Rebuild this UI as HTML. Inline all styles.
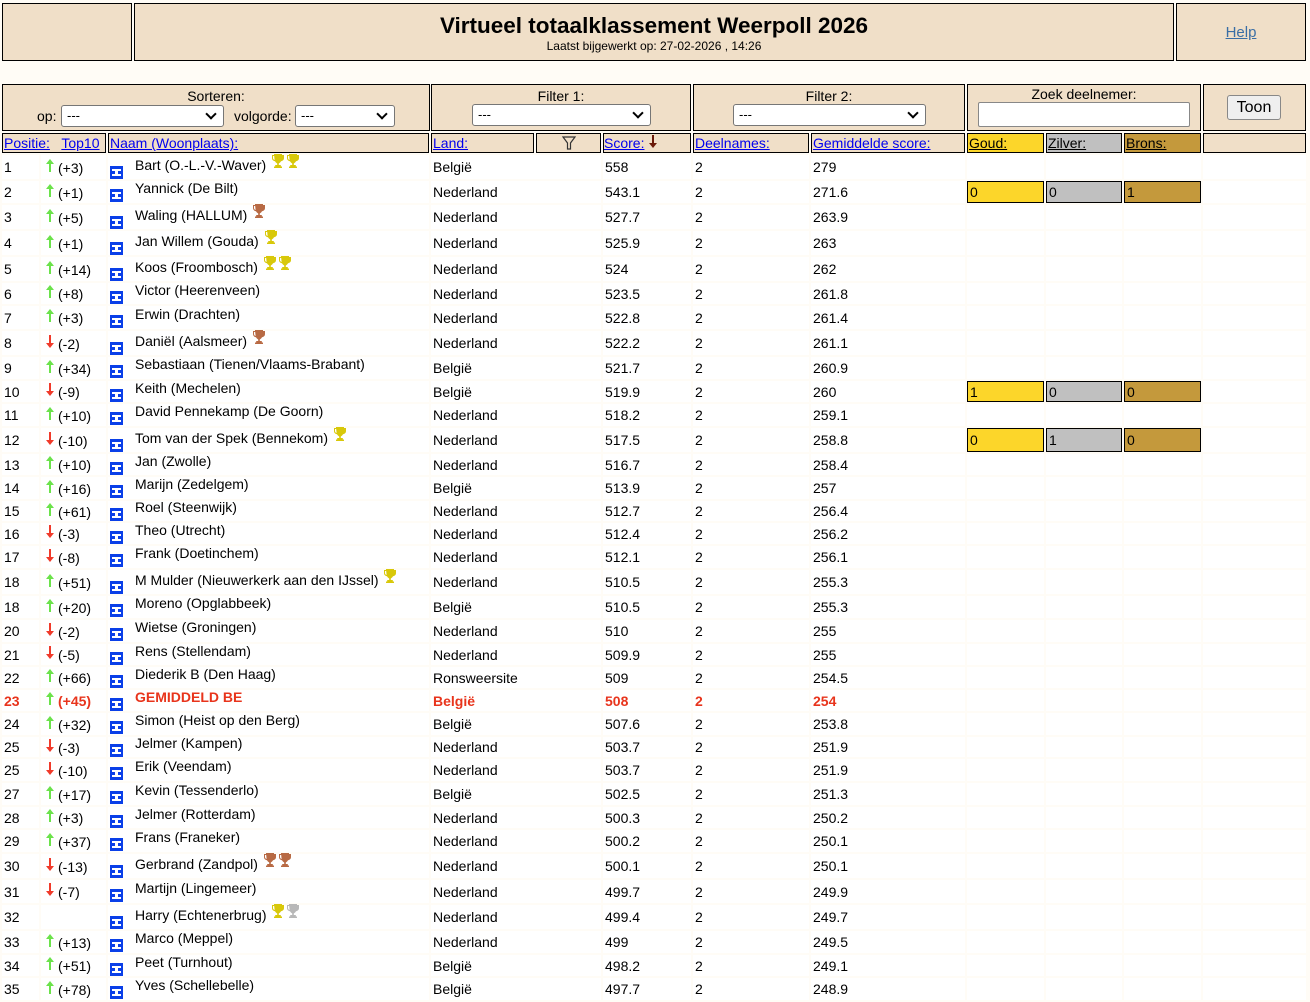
<!DOCTYPE html>
<html><head><meta charset="utf-8">
<style>
html,body{margin:0;padding:0;background:#fffcf6;width:1310px;height:1001px;overflow:hidden;font-family:"Liberation Sans",Arial,sans-serif;font-size:14px;color:#000}
.box{position:absolute;background:#f0dfc8;border:1px solid #000;box-sizing:border-box}
a{color:#00e;text-decoration:underline}
.sel{position:absolute;height:22px;background:#fff;border:1px solid #767676;border-radius:3px;box-sizing:border-box;font-size:13px;padding:2px 5px}
.sel:after{content:"";position:absolute;right:8px;top:4px;width:6px;height:6px;border-right:2px solid #000;border-bottom:2px solid #000;transform:rotate(45deg)}
table{position:absolute;left:0;top:131px;border-collapse:separate;border-spacing:2px;table-layout:fixed;width:1308px}
td{background:#fff;padding:0 0 0 2px;white-space:nowrap;overflow:visible;vertical-align:middle}
thead td{background:#f0dfc8;border:1px solid #000;height:18px;padding:0 1px}
.up,.dn{display:inline-block;width:14px;height:13px;vertical-align:1px;margin-left:0;margin-right:1px}
.up{background:linear-gradient(#6be24a,#6be24a) 6px 3px/2px 10px no-repeat}
.dn{background:linear-gradient(#f03a2a,#f03a2a) 6px 0/2px 10px no-repeat}
.up:before{content:"";display:block;margin-left:3px;width:0;height:0;border-left:4px solid transparent;border-right:4px solid transparent;border-bottom:5px solid #6be24a}
.dn:before{content:"";display:block;margin-left:3px;margin-top:8px;width:0;height:0;border-left:4px solid transparent;border-right:4px solid transparent;border-top:5px solid #f03a2a}
.fl{display:inline-block;vertical-align:-7px;margin-right:12px}
.nm{position:relative;top:-2px}
.tr{display:inline-block;vertical-align:1px;margin-left:1px}
.m{border:1px solid #000;padding:0 2px;height:18px}
.r td{color:#e8341c;font-weight:bold}
.r td.n{font-weight:normal}
</style></head><body>
<svg width="0" height="0" style="position:absolute">
<defs>
<symbol id="cup" viewBox="0 0 14 16"><path d="M3 1h8v1h2v3c0 2-1.5 3-3 3.2C9.3 9.5 8.3 10 7.8 10.5V12h2v1.5H11V15H3v-1.5h1.2V12h2v-1.5C5.7 10 4.7 9.5 4 8.2 2.5 8 1 7 1 5V2h2z M2 3v2c0 1 .7 1.8 1.6 2L3.2 3z M12 3v2c0 1-.7 1.8-1.6 2l.4-4z" fill="currentColor"/></symbol>
<symbol id="flag" viewBox="0 0 13 13"><rect width="13" height="13" fill="#0a3fe8"/><path d="M2 3h9v2H8v3h3v2H2V8h3V5H2z" fill="#fff"/></symbol>
</defs></svg>

<div class="box" style="left:2px;top:3px;width:130px;height:58px"></div>
<div class="box" style="left:134px;top:3px;width:1040px;height:58px;text-align:center">
<div style="font-size:22.5px;font-weight:bold;margin-top:9px">Virtueel totaalklassement Weerpoll 2026</div>
<div style="font-size:12px;margin-top:0px">Laatst bijgewerkt op: 27-02-2026 , 14:26</div></div>
<div class="box" style="left:1176px;top:3px;width:130px;height:58px;text-align:center;line-height:58px;font-size:15px"><a style="color:#3a6ea5">Help</a></div>

<div class="box" style="left:2px;top:84px;width:428px;height:47px">
<div style="position:absolute;left:0;right:0;top:3px;text-align:center">Sorteren:</div>
<div style="position:absolute;left:34px;top:23px">op:</div>
<div class="sel" style="left:58px;top:20px;width:163px">---</div>
<div style="position:absolute;left:231px;top:23px">volgorde:</div>
<div class="sel" style="left:292px;top:20px;width:100px">---</div></div>
<div class="box" style="left:431px;top:84px;width:260px;height:47px">
<div style="position:absolute;left:0;right:0;top:3px;text-align:center">Filter 1:</div>
<div class="sel" style="left:40px;top:19px;width:179px">---</div></div>
<div class="box" style="left:693px;top:84px;width:272px;height:47px">
<div style="position:absolute;left:0;right:0;top:3px;text-align:center">Filter 2:</div>
<div class="sel" style="left:39px;top:19px;width:193px">---</div></div>
<div class="box" style="left:967px;top:84px;width:234px;height:47px">
<div style="position:absolute;left:0;right:0;top:1px;text-align:center">Zoek deelnemer:</div>
<div style="position:absolute;left:10px;top:17px;width:212px;height:25px;background:#fff;border:1px solid #888;border-radius:2px;box-sizing:border-box"></div></div>
<div class="box" style="left:1203px;top:84px;width:103px;height:47px">
<div style="position:absolute;left:23px;top:10px;width:54px;height:25px;background:#efefef;border:1px solid #888;border-radius:3px;box-sizing:border-box;text-align:center;line-height:23px;font-size:16px">Toon</div></div>

<table>
<colgroup><col style="width:37px"><col style="width:65px"><col style="width:321px"><col style="width:103px"><col style="width:65px"><col style="width:88px"><col style="width:116px"><col style="width:154px"><col style="width:77px"><col style="width:76px"><col style="width:77px"><col style="width:103px"></colgroup>
<thead><tr><td colspan="2"><a>Positie:</a>&nbsp;&nbsp; <a>Top10</a></td><td><a>Naam (Woonplaats):</a></td><td><a>Land:</a></td><td style="text-align:center"><svg width="14" height="14" viewBox="0 0 14 14" style="vertical-align:-2px"><path d="M1 1h12L8.5 7v6h-3V7z" fill="none" stroke="#333" stroke-width="1.2"/></svg></td><td style="padding-left:0"><a>Score:</a> <svg width="10" height="14" viewBox="0 0 10 14" style="vertical-align:-1px"><path d="M5 0v10" stroke="#6a1a0a" stroke-width="2"/><path d="M1 8h8l-4 5z" fill="#6a1a0a"/></svg></td><td><a>Deelnames:</a></td><td><a>Gemiddelde score:</a></td><td style="background:#fcd62a"><a style="color:#000">Goud:</a></td><td style="background:#c0c0c0"><a style="color:#000">Zilver:</a></td><td style="background:#c4993c"><a style="color:#000">Brons:</a></td><td></td></tr></thead>
<tbody>
<tr style="height:23px"><td>1</td><td><span class="up"></span>(+3)</td><td><svg class="fl" width="13" height="13"><use href="#flag"/></svg><span class="nm">Bart (O.-L.-V.-Waver) <svg class="tr" width="14" height="16" style="color:#d8c80a"><use href="#cup"/></svg><svg class="tr" width="14" height="16" style="color:#d8c80a"><use href="#cup"/></svg></span></td><td colspan="2">België</td><td>558</td><td>2</td><td>279</td><td></td><td></td><td></td><td></td></tr>
<tr style="height:22px"><td>2</td><td><span class="up"></span>(+1)</td><td><svg class="fl" width="13" height="13"><use href="#flag"/></svg><span class="nm">Yannick (De Bilt)</span></td><td colspan="2">Nederland</td><td>543.1</td><td>2</td><td>271.6</td><td class="m" style="background:#fcd62a">0</td><td class="m" style="background:#c0c0c0">0</td><td class="m" style="background:#c4993c">1</td><td></td></tr>
<tr style="height:24px"><td>3</td><td><span class="up"></span>(+5)</td><td><svg class="fl" width="13" height="13"><use href="#flag"/></svg><span class="nm">Waling (HALLUM) <svg class="tr" width="14" height="16" style="color:#b86a44"><use href="#cup"/></svg></span></td><td colspan="2">Nederland</td><td>527.7</td><td>2</td><td>263.9</td><td></td><td></td><td></td><td></td></tr>
<tr style="height:23px"><td>4</td><td><span class="up"></span>(+1)</td><td><svg class="fl" width="13" height="13"><use href="#flag"/></svg><span class="nm">Jan Willem (Gouda) <svg class="tr" width="14" height="16" style="color:#d8c80a"><use href="#cup"/></svg></span></td><td colspan="2">Nederland</td><td>525.9</td><td>2</td><td>263</td><td></td><td></td><td></td><td></td></tr>
<tr style="height:23px"><td>5</td><td><span class="up"></span>(+14)</td><td><svg class="fl" width="13" height="13"><use href="#flag"/></svg><span class="nm">Koos (Froombosch) <svg class="tr" width="14" height="16" style="color:#d8c80a"><use href="#cup"/></svg><svg class="tr" width="14" height="16" style="color:#d8c80a"><use href="#cup"/></svg></span></td><td colspan="2">Nederland</td><td>524</td><td>2</td><td>262</td><td></td><td></td><td></td><td></td></tr>
<tr style="height:21px"><td>6</td><td><span class="up"></span>(+8)</td><td><svg class="fl" width="13" height="13"><use href="#flag"/></svg><span class="nm">Victor (Heerenveen)</span></td><td colspan="2">Nederland</td><td>523.5</td><td>2</td><td>261.8</td><td></td><td></td><td></td><td></td></tr>
<tr style="height:23px"><td>7</td><td><span class="up"></span>(+3)</td><td><svg class="fl" width="13" height="13"><use href="#flag"/></svg><span class="nm">Erwin (Drachten)</span></td><td colspan="2">Nederland</td><td>522.8</td><td>2</td><td>261.4</td><td></td><td></td><td></td><td></td></tr>
<tr style="height:22px"><td>8</td><td><span class="dn"></span>(-2)</td><td><svg class="fl" width="13" height="13"><use href="#flag"/></svg><span class="nm">Daniël (Aalsmeer) <svg class="tr" width="14" height="16" style="color:#b86a44"><use href="#cup"/></svg></span></td><td colspan="2">Nederland</td><td>522.2</td><td>2</td><td>261.1</td><td></td><td></td><td></td><td></td></tr>
<tr style="height:22px"><td>9</td><td><span class="up"></span>(+34)</td><td><svg class="fl" width="13" height="13"><use href="#flag"/></svg><span class="nm">Sebastiaan (Tienen/Vlaams-Brabant)</span></td><td colspan="2">België</td><td>521.7</td><td>2</td><td>260.9</td><td></td><td></td><td></td><td></td></tr>
<tr style="height:21px"><td>10</td><td><span class="dn"></span>(-9)</td><td><svg class="fl" width="13" height="13"><use href="#flag"/></svg><span class="nm">Keith (Mechelen)</span></td><td colspan="2">België</td><td>519.9</td><td>2</td><td>260</td><td class="m" style="background:#fcd62a">1</td><td class="m" style="background:#c0c0c0">0</td><td class="m" style="background:#c4993c">0</td><td></td></tr>
<tr style="height:22px"><td>11</td><td><span class="up"></span>(+10)</td><td><svg class="fl" width="13" height="13"><use href="#flag"/></svg><span class="nm">David Pennekamp (De Goorn)</span></td><td colspan="2">Nederland</td><td>518.2</td><td>2</td><td>259.1</td><td></td><td></td><td></td><td></td></tr>
<tr style="height:22px"><td>12</td><td><span class="dn"></span>(-10)</td><td><svg class="fl" width="13" height="13"><use href="#flag"/></svg><span class="nm">Tom van der Spek (Bennekom) <svg class="tr" width="14" height="16" style="color:#d8c80a"><use href="#cup"/></svg></span></td><td colspan="2">Nederland</td><td>517.5</td><td>2</td><td>258.8</td><td class="m" style="background:#fcd62a">0</td><td class="m" style="background:#c0c0c0">1</td><td class="m" style="background:#c4993c">0</td><td></td></tr>
<tr style="height:21px"><td>13</td><td><span class="up"></span>(+10)</td><td><svg class="fl" width="13" height="13"><use href="#flag"/></svg><span class="nm">Jan (Zwolle)</span></td><td colspan="2">Nederland</td><td>516.7</td><td>2</td><td>258.4</td><td></td><td></td><td></td><td></td></tr>
<tr style="height:22px"><td>14</td><td><span class="up"></span>(+16)</td><td><svg class="fl" width="13" height="13"><use href="#flag"/></svg><span class="nm">Marijn (Zedelgem)</span></td><td colspan="2">België</td><td>513.9</td><td>2</td><td>257</td><td></td><td></td><td></td><td></td></tr>
<tr style="height:20px"><td>15</td><td><span class="up"></span>(+61)</td><td><svg class="fl" width="13" height="13"><use href="#flag"/></svg><span class="nm">Roel (Steenwijk)</span></td><td colspan="2">Nederland</td><td>512.7</td><td>2</td><td>256.4</td><td></td><td></td><td></td><td></td></tr>
<tr style="height:21px"><td>16</td><td><span class="dn"></span>(-3)</td><td><svg class="fl" width="13" height="13"><use href="#flag"/></svg><span class="nm">Theo (Utrecht)</span></td><td colspan="2">Nederland</td><td>512.4</td><td>2</td><td>256.2</td><td></td><td></td><td></td><td></td></tr>
<tr style="height:22px"><td>17</td><td><span class="dn"></span>(-8)</td><td><svg class="fl" width="13" height="13"><use href="#flag"/></svg><span class="nm">Frank (Doetinchem)</span></td><td colspan="2">Nederland</td><td>512.1</td><td>2</td><td>256.1</td><td></td><td></td><td></td><td></td></tr>
<tr style="height:22px"><td>18</td><td><span class="up"></span>(+51)</td><td><svg class="fl" width="13" height="13"><use href="#flag"/></svg><span class="nm">M Mulder (Nieuwerkerk aan den IJssel) <svg class="tr" width="14" height="16" style="color:#d8c80a"><use href="#cup"/></svg></span></td><td colspan="2">Nederland</td><td>510.5</td><td>2</td><td>255.3</td><td></td><td></td><td></td><td></td></tr>
<tr style="height:22px"><td>18</td><td><span class="up"></span>(+20)</td><td><svg class="fl" width="13" height="13"><use href="#flag"/></svg><span class="nm">Moreno (Opglabbeek)</span></td><td colspan="2">België</td><td>510.5</td><td>2</td><td>255.3</td><td></td><td></td><td></td><td></td></tr>
<tr style="height:22px"><td>20</td><td><span class="dn"></span>(-2)</td><td><svg class="fl" width="13" height="13"><use href="#flag"/></svg><span class="nm">Wietse (Groningen)</span></td><td colspan="2">Nederland</td><td>510</td><td>2</td><td>255</td><td></td><td></td><td></td><td></td></tr>
<tr style="height:21px"><td>21</td><td><span class="dn"></span>(-5)</td><td><svg class="fl" width="13" height="13"><use href="#flag"/></svg><span class="nm">Rens (Stellendam)</span></td><td colspan="2">Nederland</td><td>509.9</td><td>2</td><td>255</td><td></td><td></td><td></td><td></td></tr>
<tr style="height:21px"><td>22</td><td><span class="up"></span>(+66)</td><td><svg class="fl" width="13" height="13"><use href="#flag"/></svg><span class="nm">Diederik B (Den Haag)</span></td><td colspan="2">Ronsweersite</td><td>509</td><td>2</td><td>254.5</td><td></td><td></td><td></td><td></td></tr>
<tr class="r" style="height:21px"><td>23</td><td><span class="up"></span>(+45)</td><td class="n"><svg class="fl" width="13" height="13"><use href="#flag"/></svg><span class="nm" style="font-weight:bold">GEMIDDELD BE</span></td><td colspan="2">België</td><td>508</td><td>2</td><td>254</td><td></td><td></td><td></td><td></td></tr>
<tr style="height:22px"><td>24</td><td><span class="up"></span>(+32)</td><td><svg class="fl" width="13" height="13"><use href="#flag"/></svg><span class="nm">Simon (Heist op den Berg)</span></td><td colspan="2">België</td><td>507.6</td><td>2</td><td>253.8</td><td></td><td></td><td></td><td></td></tr>
<tr style="height:20px"><td>25</td><td><span class="dn"></span>(-3)</td><td><svg class="fl" width="13" height="13"><use href="#flag"/></svg><span class="nm">Jelmer (Kampen)</span></td><td colspan="2">Nederland</td><td>503.7</td><td>2</td><td>251.9</td><td></td><td></td><td></td><td></td></tr>
<tr style="height:22px"><td>25</td><td><span class="dn"></span>(-10)</td><td><svg class="fl" width="13" height="13"><use href="#flag"/></svg><span class="nm">Erik (Veendam)</span></td><td colspan="2">Nederland</td><td>503.7</td><td>2</td><td>251.9</td><td></td><td></td><td></td><td></td></tr>
<tr style="height:22px"><td>27</td><td><span class="up"></span>(+17)</td><td><svg class="fl" width="13" height="13"><use href="#flag"/></svg><span class="nm">Kevin (Tessenderlo)</span></td><td colspan="2">België</td><td>502.5</td><td>2</td><td>251.3</td><td></td><td></td><td></td><td></td></tr>
<tr style="height:21px"><td>28</td><td><span class="up"></span>(+3)</td><td><svg class="fl" width="13" height="13"><use href="#flag"/></svg><span class="nm">Jelmer (Rotterdam)</span></td><td colspan="2">Nederland</td><td>500.3</td><td>2</td><td>250.2</td><td></td><td></td><td></td><td></td></tr>
<tr style="height:22px"><td>29</td><td><span class="up"></span>(+37)</td><td><svg class="fl" width="13" height="13"><use href="#flag"/></svg><span class="nm">Frans (Franeker)</span></td><td colspan="2">Nederland</td><td>500.2</td><td>2</td><td>250.1</td><td></td><td></td><td></td><td></td></tr>
<tr style="height:23px"><td>30</td><td><span class="dn"></span>(-13)</td><td><svg class="fl" width="13" height="13"><use href="#flag"/></svg><span class="nm">Gerbrand (Zandpol) <svg class="tr" width="14" height="16" style="color:#b86a44"><use href="#cup"/></svg><svg class="tr" width="14" height="16" style="color:#b86a44"><use href="#cup"/></svg></span></td><td colspan="2">Nederland</td><td>500.1</td><td>2</td><td>250.1</td><td></td><td></td><td></td><td></td></tr>
<tr style="height:23px"><td>31</td><td><span class="dn"></span>(-7)</td><td><svg class="fl" width="13" height="13"><use href="#flag"/></svg><span class="nm">Martijn (Lingemeer)</span></td><td colspan="2">Nederland</td><td>499.7</td><td>2</td><td>249.9</td><td></td><td></td><td></td><td></td></tr>
<tr style="height:24px"><td>32</td><td></td><td><svg class="fl" width="13" height="13"><use href="#flag"/></svg><span class="nm">Harry (Echtenerbrug) <svg class="tr" width="14" height="16" style="color:#d8c80a"><use href="#cup"/></svg><svg class="tr" width="14" height="16" style="color:#b8b8b8"><use href="#cup"/></svg></span></td><td colspan="2">Nederland</td><td>499.4</td><td>2</td><td>249.7</td><td></td><td></td><td></td><td></td></tr>
<tr style="height:22px"><td>33</td><td><span class="up"></span>(+13)</td><td><svg class="fl" width="13" height="13"><use href="#flag"/></svg><span class="nm">Marco (Meppel)</span></td><td colspan="2">Nederland</td><td>499</td><td>2</td><td>249.5</td><td></td><td></td><td></td><td></td></tr>
<tr style="height:21px"><td>34</td><td><span class="up"></span>(+51)</td><td><svg class="fl" width="13" height="13"><use href="#flag"/></svg><span class="nm">Peet (Turnhout)</span></td><td colspan="2">België</td><td>498.2</td><td>2</td><td>249.1</td><td></td><td></td><td></td><td></td></tr>
<tr style="height:22px"><td>35</td><td><span class="up"></span>(+78)</td><td><svg class="fl" width="13" height="13"><use href="#flag"/></svg><span class="nm">Yves (Schellebelle)</span></td><td colspan="2">België</td><td>497.7</td><td>2</td><td>248.9</td><td></td><td></td><td></td><td></td></tr>
</tbody></table>
</body></html>
